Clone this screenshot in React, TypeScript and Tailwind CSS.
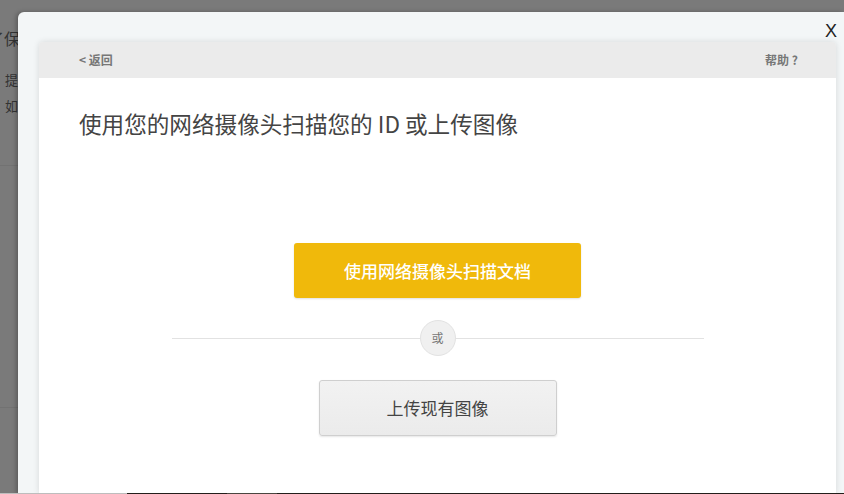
export default function App() {
  return (
    <div className="relative w-[844px] h-[494px] overflow-hidden bg-[#7a7a7a] font-['Noto_Sans_CJK_SC','Noto_Sans',sans-serif]">
      {/* page behind the modal */}
      <div className="flex flex-col text-[#333]">
        <div className="h-[166px] border-b border-[#727272]">
          <p className="ml-[-12px] mt-[26px] text-[16px] leading-[24px]">了保</p>
          <p className="ml-[5px] mt-[20px] text-[13px] leading-[20px]">提</p>
          <p className="ml-[5px] mt-[6px] text-[13px] leading-[20px]">如</p>
        </div>
        <div className="h-[242px] border-b border-[#727272]" />
      </div>

      {/* modal */}
      <div className="absolute left-[18px] top-[12px] right-0 bottom-0 flex flex-col rounded-tl-[6px] bg-[#f3f6f7] shadow-[-2px_0_4px_rgba(0,0,0,0.25)]">
        <button className="absolute right-[7px] top-[8px] font-['Liberation_Sans',sans-serif] text-[18px] leading-[22px] text-[#222]">
          X
        </button>

        <div className="ml-[21px] mr-[8px] mt-[30px] flex flex-1 flex-col overflow-hidden rounded-t-[4px] shadow-[0_0_6px_rgba(0,0,0,0.12)]">
          <div className="flex h-[36px] shrink-0 items-center justify-between bg-[#ebebeb] pl-[40px] pr-[38px] text-[12px] font-bold text-[#777]">
            <span>&lt; 返回</span>
            <span>帮助 ?</span>
          </div>

          <div className="flex flex-1 flex-col bg-white px-[40px] pt-[31px]">
            <h1 className="text-[22.6px] font-normal leading-[30px] text-[#444]">
              使用您的网络摄像头扫描您的 ID 或上传图像
            </h1>

            <div className="mt-[104px] flex flex-col items-center">
              <button className="flex h-[55px] w-[287px] items-center justify-center rounded-[3px] bg-[#f0b90b] text-[17px] font-medium text-white shadow-[0_1px_2px_rgba(0,0,0,0.12)]">
                使用网络摄像头扫描文档
              </button>

              <div className="relative mt-[22px] flex h-[36px] w-[532px] items-center justify-center">
                <div className="absolute inset-x-0 top-1/2 h-px bg-[#e2e2e2]" />
                <span className="relative flex h-[36px] w-[36px] items-center justify-center rounded-full border border-[#e2e2e2] bg-[#f0f0f0] text-[12px] text-[#777]">
                  或
                </span>
              </div>

              <button className="mt-[24px] flex h-[56px] w-[238px] items-center justify-center rounded-[3px] border border-[#cfcfcf] bg-gradient-to-b from-[#f2f2f2] to-[#ebebeb] text-[17px] text-[#444] shadow-[0_1px_2px_rgba(0,0,0,0.1)]">
                上传现有图像
              </button>
            </div>
          </div>
        </div>
      </div>

      {/* strip along the bottom edge */}
      <div className="absolute inset-x-0 bottom-0 flex h-px">
        <div className="w-[127px] bg-[#bdbdbd]" />
        <div className="w-[100px] bg-[#231f1b]" />
        <div className="w-[50px] bg-[#4a4640]" />
        <div className="flex-1 bg-[#231f1b]" />
      </div>
    </div>
  );
}
